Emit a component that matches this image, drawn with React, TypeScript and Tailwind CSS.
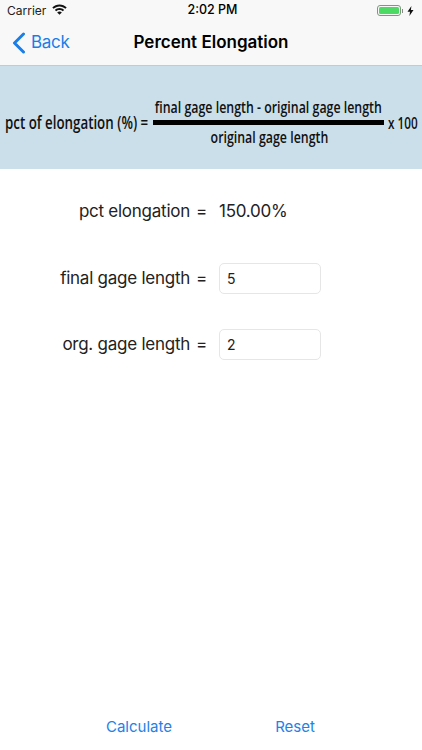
export default function App() {
  const sans = { fontFamily: "Inter, 'Liberation Sans', sans-serif" };
  return (
    <div className="w-[422px] h-[750px] bg-white flex flex-col overflow-hidden font-[Inter,sans-serif]">
      <header className="bg-[#f8f8f8] border-b border-[#c9c9c9] h-[66px] shrink-0 flex flex-col">
        <div className="h-[20px] shrink-0 grid grid-cols-3 items-center px-[7px] pt-[1px] text-[12px] text-black">
          <div className="flex items-center gap-[6px]">
            <span className="text-[#222]">Carrier</span>
            <svg width="15" height="11" viewBox="0 0 15 11" fill="#111" className="-mt-[2px]">
              <path d="M7.5 0.5C4.7 0.5 2.2 1.6 0.3 3.4L1.6 4.8C3.1 3.3 5.2 2.4 7.5 2.4S11.9 3.3 13.4 4.8L14.7 3.4C12.8 1.6 10.3 0.5 7.5 0.5Z" />
              <path d="M7.5 4C5.7 4 4.1 4.7 2.9 5.9L4.2 7.3C5.1 6.4 6.2 5.9 7.5 5.9S9.9 6.4 10.8 7.3L12.1 5.9C10.9 4.7 9.3 4 7.5 4Z" />
              <path d="M7.5 7.4C6.6 7.4 5.8 7.8 5.2 8.4L7.5 10.8L9.8 8.4C9.2 7.8 8.4 7.4 7.5 7.4Z" />
            </svg>
          </div>
          <div className="text-center font-medium text-[12.5px] whitespace-nowrap pl-[3px]">2:02 PM</div>
          <div className="flex items-center justify-end gap-[3px] pr-[1px]">
            <div className="w-[24px] h-[11px] rounded-[3px] border border-[#7a9a7a] p-[1px]">
              <div className="w-full h-full rounded-[1.5px] bg-[#4cd964]" />
            </div>
            <div className="w-[1px] h-[4px] bg-[#888] -ml-[2px]" />
            <svg width="7" height="10" viewBox="0 0 7 10" fill="#111" className="ml-[1px]">
              <path d="M4.4 0L0.5 5.7H3L2.4 10L6.5 4H3.9Z" />
            </svg>
          </div>
        </div>
        <div className="relative flex-1 flex items-center justify-center">
          <div className="absolute left-[12px] top-0 bottom-0 flex items-center gap-[5px] text-[#1a7ee8]">
            <svg width="14" height="22" viewBox="0 0 14 22" fill="none" stroke="currentColor" strokeWidth="3" strokeLinecap="round" strokeLinejoin="round">
              <path d="M11.5 2L2.5 11L11.5 20" />
            </svg>
            <span className="text-[17px] tracking-[-0.3px]">Back</span>
          </div>
          <h1 className="text-[17px] font-semibold text-black whitespace-nowrap">Percent Elongation</h1>
        </div>
      </header>

      <section className="h-[103px] shrink-0 bg-[#cbdfeb] flex items-center pl-[5px] pt-[9px] text-[#111] font-['Open_Sans',sans-serif] font-semibold whitespace-nowrap">
        <span className="text-[18px] w-[148px] inline-block origin-left scale-x-[0.74] pt-[1px]">pct of elongation (%) =</span>
        <div className="w-[231px] flex flex-col items-center">
          <span className="text-[16.5px] leading-[20px] mb-[3px] scale-x-[0.75]">final gage length - original gage length</span>
          <div className="w-full h-[5px] bg-black" />
          <span className="text-[16.5px] leading-[20px] mt-[2px] scale-x-[0.75] -mr-[1px]">original gage length</span>
        </div>
        <span className="text-[17px] ml-[4px] inline-block origin-left scale-x-[0.69] pt-[1px]">x 100</span>
      </section>

      <main className="flex-1 flex flex-col pt-[28px] gap-[36px] text-[17px] tracking-[-0.25px] text-[#222]" style={sans}>
        <div className="flex items-center h-[30px]">
          <span className="w-[190px] text-right">pct elongation</span>
          <span className="w-[29px] pl-[6px]">=</span>
          <span>150.00%</span>
        </div>
        <div className="flex items-center h-[31px]">
          <span className="w-[190px] text-right">final gage length</span>
          <span className="w-[29px] pl-[6px]">=</span>
          <div className="w-[102px] h-[31px] border border-[#e6e6e6] rounded-[5px] flex items-center pl-[7px] text-[14px]">5</div>
        </div>
        <div className="flex items-center h-[31px] -mt-[1px]">
          <span className="w-[190px] text-right">org. gage length</span>
          <span className="w-[29px] pl-[6px]">=</span>
          <div className="w-[102px] h-[31px] border border-[#e6e6e6] rounded-[5px] flex items-center pl-[7px] text-[14px]">2</div>
        </div>
      </main>

      <footer className="h-[37px] shrink-0 flex items-start pt-[3px] text-[15px] text-[#2481e6]">
        <span className="w-[218px] pl-[60px] text-center">Calculate</span>
        <span className="w-[154px] text-center">Reset</span>
      </footer>
    </div>
  );
}
